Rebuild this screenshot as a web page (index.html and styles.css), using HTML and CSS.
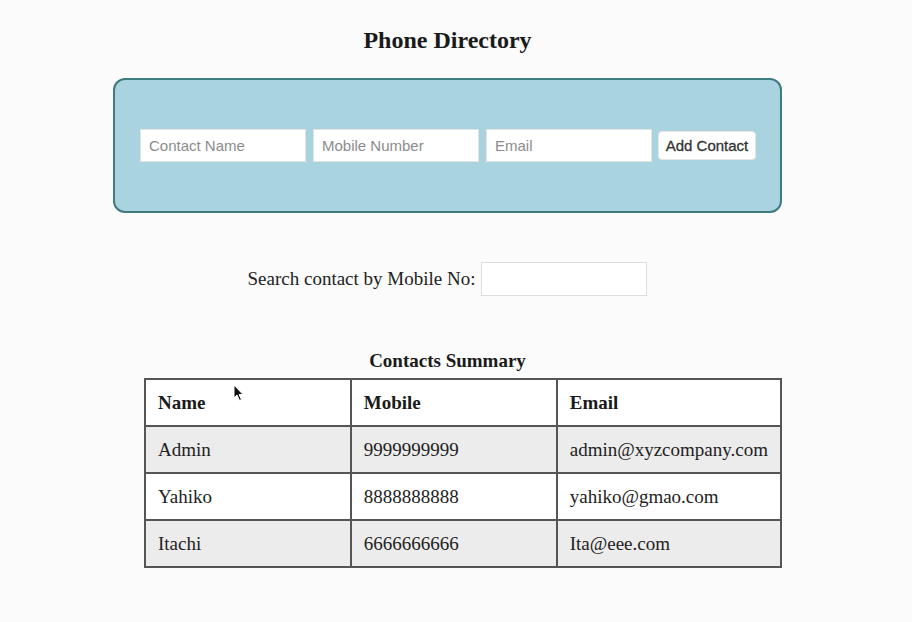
FILE: index.html
```html
<!DOCTYPE html>
<html>
<head>
<meta charset="utf-8">
<title>Phone Directory</title>
<link rel="stylesheet" href="styles.css">
</head>
<body>
<div class="page">
  <h1 class="title">Phone Directory</h1>
  <div class="form-box">
    <input class="field" type="text" placeholder="Contact Name">
    <input class="field" type="text" placeholder="Mobile Number">
    <input class="field" type="text" placeholder="Email">
    <button class="add-btn">Add Contact</button>
  </div>
  <div class="search-row">
    <label class="search-label">Search contact by Mobile No:</label>
    <input class="search-input" type="text">
  </div>
  <h2 class="summary-title">Contacts Summary</h2>
  <div class="table-wrap">
    <table class="contacts">
      <thead>
        <tr><th>Name</th><th>Mobile</th><th>Email</th></tr>
      </thead>
      <tbody>
        <tr class="shade"><td>Admin</td><td>9999999999</td><td>admin@xyzcompany.com</td></tr>
        <tr><td>Yahiko</td><td>8888888888</td><td>yahiko@gmao.com</td></tr>
        <tr class="shade"><td>Itachi</td><td>6666666666</td><td>Ita@eee.com</td></tr>
      </tbody>
    </table>
    <svg class="cursor" width="12" height="18" viewBox="0 0 12 18"><path d="M1 1 L1 14 L4 11 L6.5 16.5 L8.5 15.5 L6 10.5 L10 10.5 Z" fill="#111" stroke="#fff" stroke-width="1"/></svg>
  </div>
</div>
</body>
</html>
```

FILE: styles.css
```css
html, body {
  margin: 0;
  padding: 0;
  background: #fbfbfb;
}
.page {
  width: 895px;
  display: flex;
  flex-direction: column;
  align-items: center;
  font-family: "Liberation Serif", "Times New Roman", serif;
  color: #1a1a1a;
}
.title {
  margin: 26px 0 0 0;
  font-size: 24px;
  line-height: 28px;
  font-weight: bold;
}
.form-box {
  margin-top: 24px;
  box-sizing: border-box;
  width: 669px;
  height: 135px;
  border: 2px solid #3f7b80;
  border-radius: 12px;
  background: #a9d4df;
  display: flex;
  align-items: center;
  padding-left: 25px;
  gap: 7px;
}
.field {
  box-sizing: border-box;
  width: 166px;
  height: 33px;
  border: 1px solid #e2e2e2;
  background: #fff;
  padding: 0 8px;
  font-family: "Liberation Sans", Arial, sans-serif;
  font-size: 15px;
  outline: none;
}
.field::placeholder {
  color: #8c8c8c;
}
.add-btn {
  box-sizing: border-box;
  width: 98px;
  height: 29px;
  margin-left: -1px;
  border: 1px solid #e6e6e6;
  border-radius: 4px;
  background: #fff;
  font-family: "Liberation Sans", Arial, sans-serif;
  font-size: 15px;
  color: #333;
  padding: 0;
  -webkit-text-stroke: 0.3px #333;
}
.search-row {
  margin-top: 49px;
  display: flex;
  align-items: center;
  gap: 6px;
  height: 34px;
}
.search-label {
  font-size: 19px;
  color: #222;
}
.search-input {
  box-sizing: border-box;
  width: 166px;
  height: 34px;
  border: 1px solid #dedede;
  background: #fff;
  outline: none;
}
.summary-title {
  margin: 54px 0 0 0;
  font-size: 19px;
  line-height: 22px;
  font-weight: bold;
}
.table-wrap {
  margin-top: 6px;
  width: 669px;
  box-sizing: border-box;
  padding-left: 31px;
  position: relative;
}
.contacts {
  width: 638px;
  border-collapse: collapse;
  border: 2px solid #555;
  font-size: 19px;
}
.contacts th, .contacts td {
  border: 2px solid #555;
  height: 47px;
  box-sizing: border-box;
  padding: 0 12px;
  text-align: left;
  vertical-align: middle;
}
.contacts th:nth-child(1), .contacts td:nth-child(1) { width: 206px; }
.contacts th:nth-child(2), .contacts td:nth-child(2) { width: 206px; }
.contacts th {
  background: #fff;
  font-weight: bold;
}
.contacts td {
  background: #fff;
  color: #222;
}
.contacts tr.shade td {
  background: #ececec;
}
.cursor {
  position: absolute;
  left: 120px;
  top: 6px;
}
```
